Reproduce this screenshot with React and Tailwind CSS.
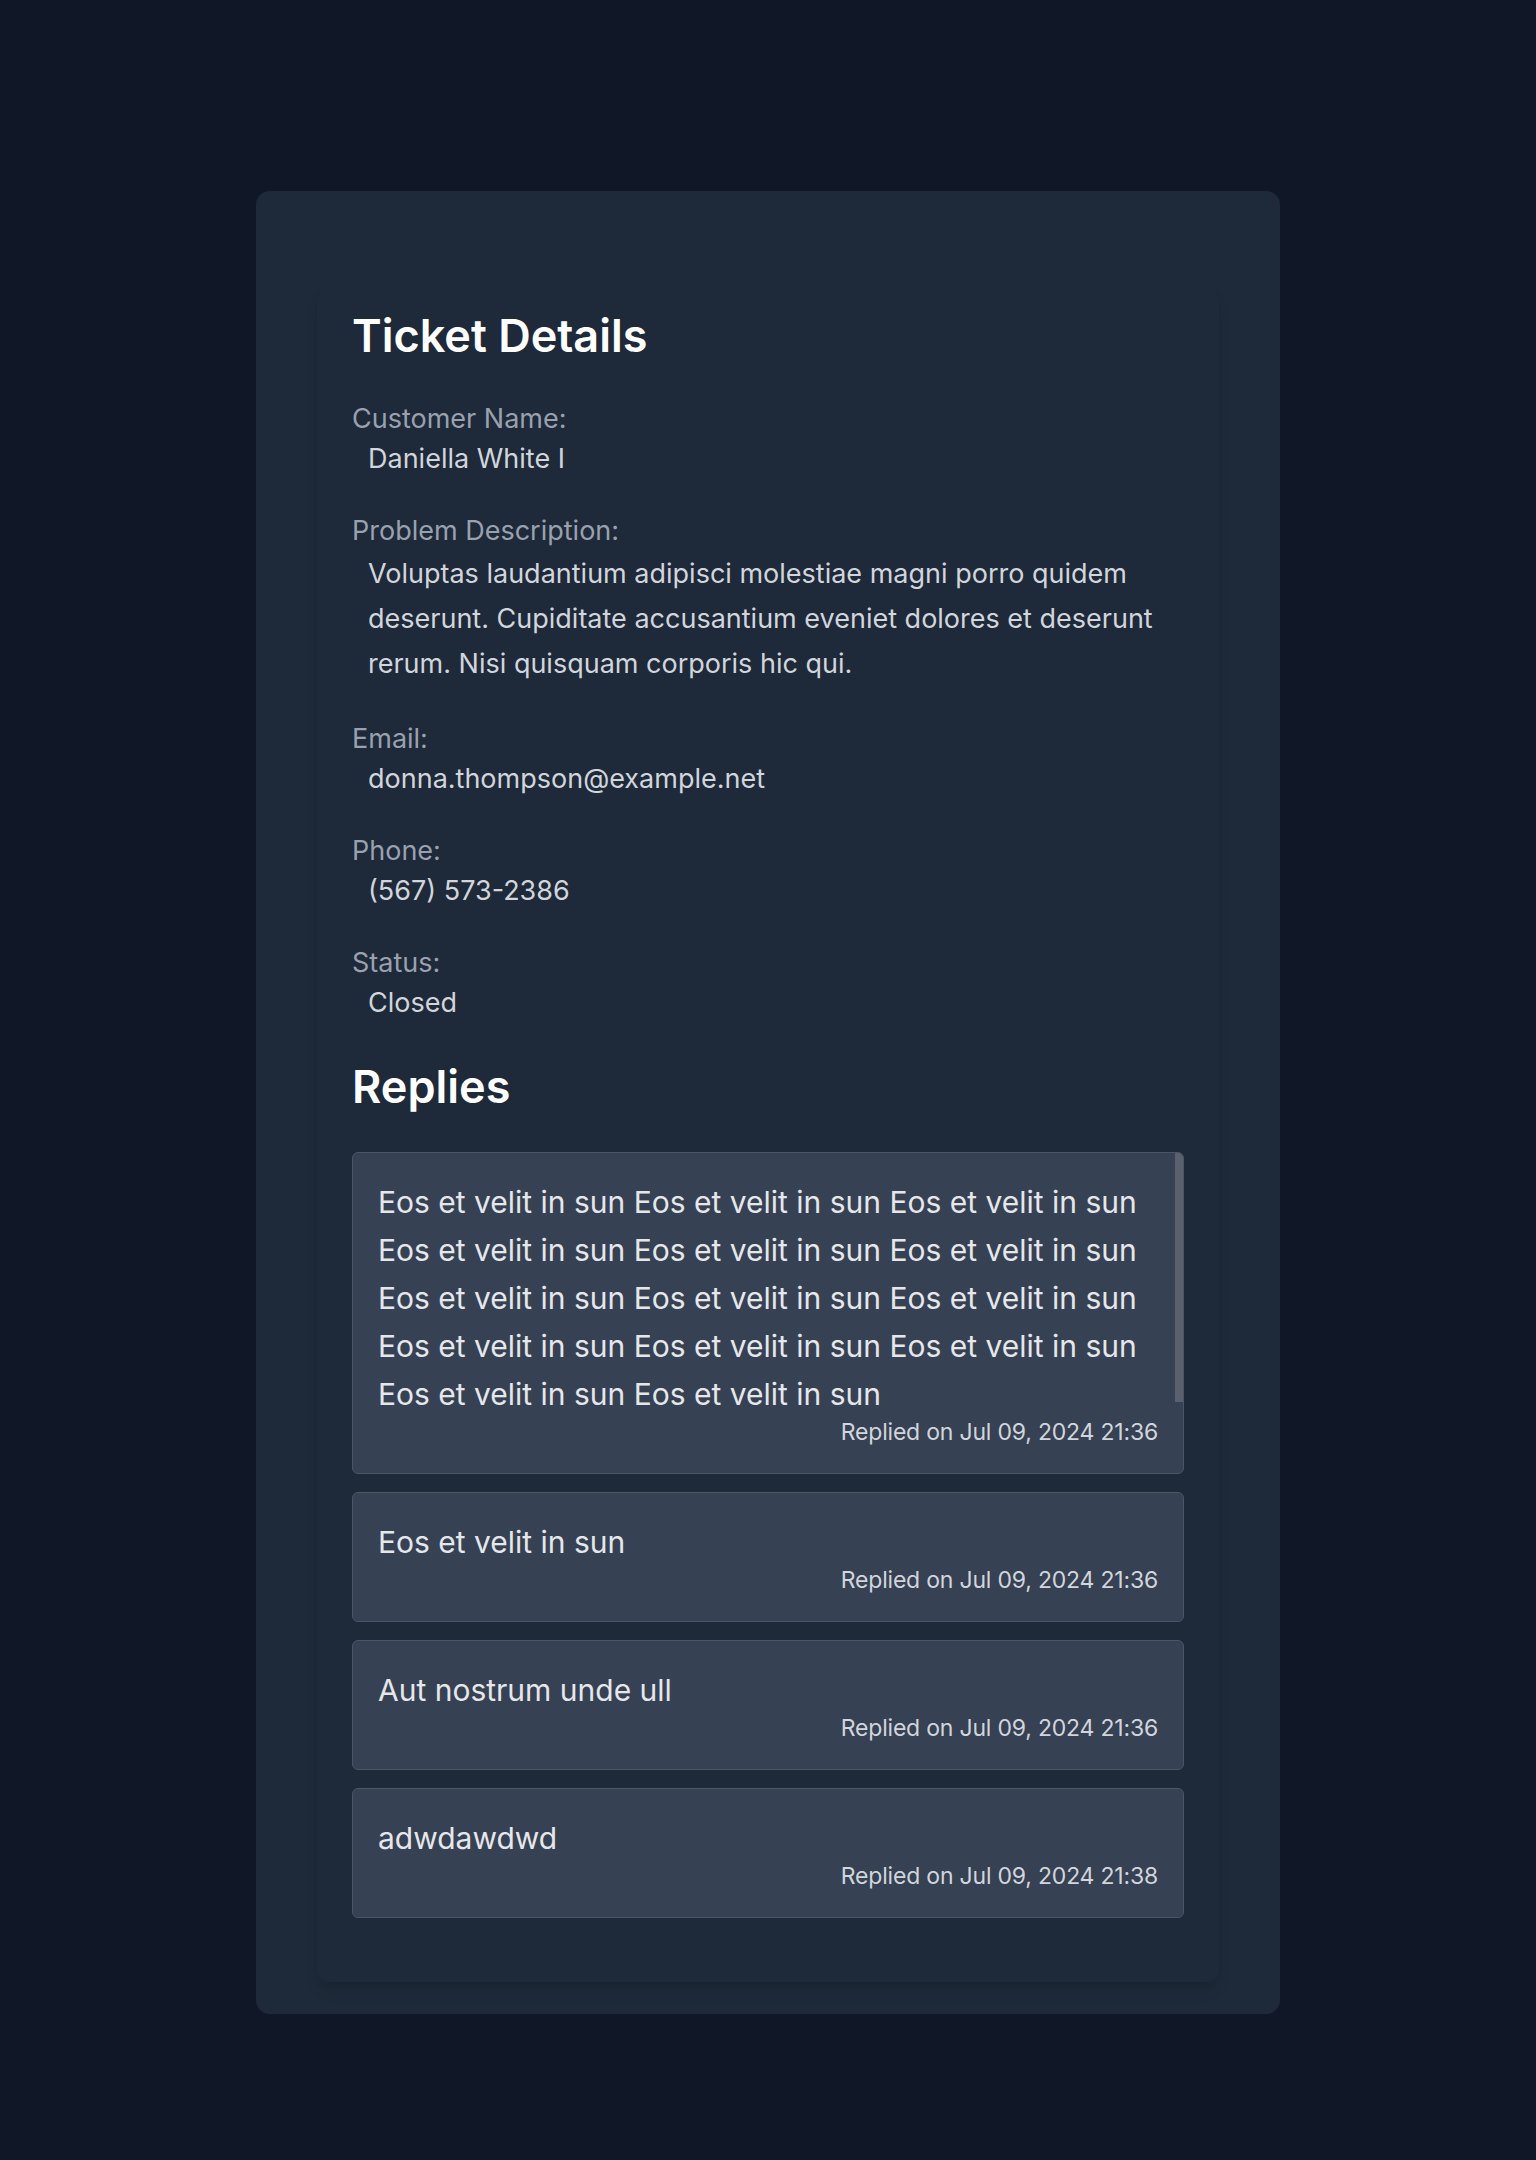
const ticket = {
  name: 'Daniella White I',
  description:
    'Voluptas laudantium adipisci molestiae magni porro quidem deserunt. Cupiditate accusantium eveniet dolores et deserunt rerum. Nisi quisquam corporis hic qui.',
  email: 'donna.thompson@example.net',
  phone: '(567) 573-2386',
  status: 'Closed',
};

const longReply = Array(14).fill('Eos et velit in sun').join(' ');

const replies = [
  { id: 1, body: longReply, time: 'Jul 09, 2024 21:36', long: true },
  { id: 2, body: 'Eos et velit in sun', time: 'Jul 09, 2024 21:36' },
  { id: 3, body: 'Aut nostrum unde ull', time: 'Jul 09, 2024 21:36' },
  { id: 4, body: 'adwdawdwd', time: 'Jul 09, 2024 21:38' },
];

function Field({ label, children, multiline }) {
  return (
    <div>
      <p className="text-[27px] leading-[40px] text-gray-400">{label}</p>
      <p
        className={
          multiline
            ? 'pl-4 text-[27px] leading-[45.2px] text-gray-300'
            : 'pl-4 text-[27px] leading-[40px] text-gray-300'
        }
      >
        {children}
      </p>
    </div>
  );
}

function Reply({ reply }) {
  return (
    <div
      className={
        reply.long
          ? 'relative h-[322px] overflow-hidden rounded-md border border-gray-600 bg-gray-700 px-[25px] pt-[25px] pb-[55px]'
          : 'relative overflow-hidden rounded-md border border-gray-600 bg-gray-700 px-[25px] pt-[25px] pb-[55px]'
      }
    >
      {/* scroll thumb of the clipped long reply */}
      {reply.long && <div className="absolute top-0 right-0 h-[249px] w-[8px] bg-[#5b616c]" />}
      <p className="text-[30px] leading-[48px] text-gray-200">{reply.body}</p>
      <p className="absolute right-[25px] bottom-[25px] text-[23px] leading-[32px] tracking-[-0.2px] text-gray-300">
        Replied on {reply.time}
      </p>
    </div>
  );
}

export default function App() {
  return (
    <div className="min-h-screen bg-gray-900 pt-[191px] pb-[145px] font-['Inter','Noto_Sans',sans-serif]">
      <div className="mx-auto w-[1024px] rounded-[14px] bg-gray-800 px-[61px] pt-[97px] pb-[32px]">
        <div className="rounded-xl bg-gray-800 px-[35px] pt-[20px] pb-[64px] shadow-lg">
          <h1 className="text-[45px] leading-[56px] font-semibold text-white">Ticket Details</h1>

          <div className="mt-[35px] flex flex-col gap-[32px]">
            <Field label="Customer Name:">{ticket.name}</Field>
            <Field label="Problem Description:" multiline>
              {ticket.description}
            </Field>
            <Field label="Email:">{ticket.email}</Field>
            <Field label="Phone:">{ticket.phone}</Field>
            <Field label="Status:">{ticket.status}</Field>
          </div>

          <h2 className="mt-[36px] text-[45px] leading-[56px] font-semibold text-white">Replies</h2>

          <div className="mt-[37px] flex flex-col gap-[18px]">
            {replies.map((reply) => (
              <Reply key={reply.id} reply={reply} />
            ))}
          </div>
        </div>
      </div>
    </div>
  );
}
